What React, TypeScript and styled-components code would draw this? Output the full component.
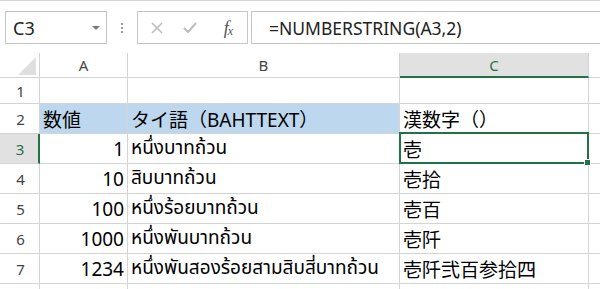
import React from "react";
import styled, { createGlobalStyle } from "styled-components";

const Global = createGlobalStyle`
  html, body { margin: 0; padding: 0; background: #ffffff; }
  body { width: 600px; height: 289px; overflow: hidden; font-family: "Noto Sans", "Noto Sans CJK JP", sans-serif; }
`;

const GRID = "#d4d4d4";
const GREEN = "#217346";
const CELL_FONT = `"Noto Sans", "Noto Sans Thai", "Noto Sans CJK JP", sans-serif`;

const Page = styled.div`
  width: 600px;
  height: 289px;
  overflow: hidden;
  border-top: 1px solid #d6d6d6;
  box-sizing: border-box;
  padding-top: 10px;
`;

const FormulaBar = styled.div`
  display: flex;
  align-items: stretch;
  height: 33px;
  padding-left: 5px;
  margin-bottom: 9px;
`;

const NameBox = styled.div`
  width: 102px;
  box-sizing: border-box;
  border: 1px solid #c6c6c6;
  display: flex;
  align-items: center;
  justify-content: space-between;
  padding: 0 6px 0 7px;
  font-size: 18px;
  color: #222;
`;

const Caret = styled.div`
  width: 0;
  height: 0;
  border-left: 4px solid transparent;
  border-right: 4px solid transparent;
  border-top: 4px solid #777;
  margin-top: 1px;
`;

const Dots = styled.div`
  width: 30px;
  display: flex;
  flex-direction: column;
  align-items: center;
  justify-content: center;
  gap: 2px;
`;

const Dot = styled.span`
  width: 2px;
  height: 2px;
  background: #9a9a9a;
`;

const ButtonsBox = styled.div`
  width: 111px;
  box-sizing: border-box;
  border: 1px solid #c6c6c6;
  display: flex;
  align-items: center;
  padding-left: 11px;
`;

const IconSlot = styled.div<{ $w: number }>`
  width: ${(p) => p.$w}px;
  display: flex;
  align-items: center;
  justify-content: center;
`;

const Fx = styled.span`
  font-family: "Liberation Serif", "DejaVu Serif", serif;
  font-style: italic;
  font-size: 18px;
  color: #555;
  letter-spacing: -1px;
  line-height: 1;
  sub { font-size: 12px; vertical-align: -1px; }
`;

const FormulaInput = styled.div`
  flex: 1;
  margin-left: 3px;
  box-sizing: border-box;
  border: 1px solid #c6c6c6;
  border-right: none;
  display: flex;
  align-items: center;
  padding-left: 17px;
  font-size: 17.5px;
  color: #222;
`;

const Sheet = styled.div`
  display: grid;
  grid-template-columns: 40px 88px 272px 189px 1fr;
  grid-auto-rows: 30px;
  grid-template-rows: 25px 26px;
`;

const Corner = styled.div`
  border-right: 1px solid ${GRID};
  border-bottom: 1px solid ${GRID};
  position: relative;
  &::after {
    content: "";
    position: absolute;
    right: 3px;
    bottom: 2px;
    width: 0;
    height: 0;
    border-left: 18px solid transparent;
    border-bottom: 18px solid #dfdfdf;
  }
`;

const ColHead = styled.div<{ $sel?: boolean; $last?: boolean }>`
  box-sizing: border-box;
  border-right: ${(p) => (p.$last ? "none" : `1px solid ${GRID}`)};
  border-bottom: ${(p) => (p.$sel ? `2px solid ${GREEN}` : `1px solid ${GRID}`)};
  background: ${(p) => (p.$sel ? "#e1e1e1" : "#fff")};
  color: ${(p) => (p.$sel ? GREEN : "#444")};
  font-family: "Noto Sans", sans-serif;
  font-size: 15px;
  display: flex;
  align-items: center;
  justify-content: center;
`;

const RowHead = styled.div<{ $sel?: boolean }>`
  box-sizing: border-box;
  border-right: ${(p) => (p.$sel ? `2px solid ${GREEN}` : `1px solid ${GRID}`)};
  border-bottom: 1px solid ${GRID};
  background: ${(p) => (p.$sel ? "#e1e1e1" : "#fff")};
  color: ${(p) => (p.$sel ? GREEN : "#444")};
  font-family: "Noto Sans", sans-serif;
  font-size: 15px;
  display: flex;
  align-items: center;
  justify-content: center;
  padding-left: 2px;
`;

const Cell = styled.div<{ $fill?: boolean; $right?: boolean; $last?: boolean }>`
  box-sizing: border-box;
  position: relative;
  border-right: ${(p) => (p.$last ? "none" : `1px solid ${GRID}`)};
  border-bottom: 1px solid ${GRID};
  background: ${(p) => (p.$fill ? "#bdd7ee" : "#fff")};
  font-family: ${CELL_FONT};
  font-size: 19px;
  color: #000;
  display: flex;
  align-items: center;
  justify-content: ${(p) => (p.$right ? "flex-end" : "flex-start")};
  padding: 0 3px 0 3px;
  white-space: nowrap;
  overflow: visible;
`;

const Selection = styled.div`
  position: absolute;
  left: -1px;
  top: -2px;
  right: -1px;
  bottom: -1px;
  border: 2px solid ${GREEN};
  pointer-events: none;
  z-index: 2;
`;

const Handle = styled.div`
  position: absolute;
  right: -4px;
  bottom: -4px;
  width: 5px;
  height: 5px;
  background: ${GREEN};
  border: 1px solid #fff;
  z-index: 3;
`;

type Row = { n: number; a: string; b: string; c: string; fill?: boolean; label?: boolean };

const rows: Row[] = [
  { n: 1, a: "", b: "", c: "", label: true },
  { n: 2, a: "数値", b: "タイ語（BAHTTEXT）", c: "漢数字（）", fill: true, label: true },
  { n: 3, a: "1", b: "หนึ่งบาทถ้วน", c: "壱", label: true },
  { n: 4, a: "10", b: "สิบบาทถ้วน", c: "壱拾", label: true },
  { n: 5, a: "100", b: "หนึ่งร้อยบาทถ้วน", c: "壱百", label: true },
  { n: 6, a: "1000", b: "หนึ่งพันบาทถ้วน", c: "壱阡", label: true },
  { n: 7, a: "1234", b: "หนึ่งพันสองร้อยสามสิบสี่บาทถ้วน", c: "壱阡弐百参拾四", label: true },
  { n: 8, a: "", b: "", c: "", label: false },
];

export default function App() {
  return (
    <>
      <Global />
      <Page>
        <FormulaBar>
          <NameBox>
            <span>C3</span>
            <Caret />
          </NameBox>
          <Dots>
            <Dot />
            <Dot />
            <Dot />
          </Dots>
          <ButtonsBox>
            <IconSlot $w={16}>
              <svg width="12" height="12" viewBox="0 0 12 12">
                <path d="M1 1 L11 11 M11 1 L1 11" stroke="#bdbdbd" strokeWidth="1.6" fill="none" />
              </svg>
            </IconSlot>
            <IconSlot $w={50}>
              <svg width="14" height="12" viewBox="0 0 14 12">
                <path d="M1 6 L5 10 L13 1" stroke="#bdbdbd" strokeWidth="2" fill="none" />
              </svg>
            </IconSlot>
            <IconSlot $w={26}>
              <Fx>
                f<sub>x</sub>
              </Fx>
            </IconSlot>
          </ButtonsBox>
          <FormulaInput>=NUMBERSTRING(A3,2)</FormulaInput>
        </FormulaBar>
        <Sheet>
          <Corner />
          <ColHead>A</ColHead>
          <ColHead>B</ColHead>
          <ColHead $sel>C</ColHead>
          <ColHead $last />
          {rows.map((r) => {
            const sel = r.n === 3;
            return (
              <React.Fragment key={r.n}>
                <RowHead $sel={sel}>{r.label ? r.n : ""}</RowHead>
                <Cell $fill={r.fill} $right={r.a !== "" && !r.fill}>
                  {r.a}
                </Cell>
                <Cell $fill={r.fill}>{r.b}</Cell>
                <Cell>
                  {r.c}
                  {sel && (
                    <Selection>
                      <Handle />
                    </Selection>
                  )}
                </Cell>
                <Cell $last />
              </React.Fragment>
            );
          })}
        </Sheet>
      </Page>
    </>
  );
}
